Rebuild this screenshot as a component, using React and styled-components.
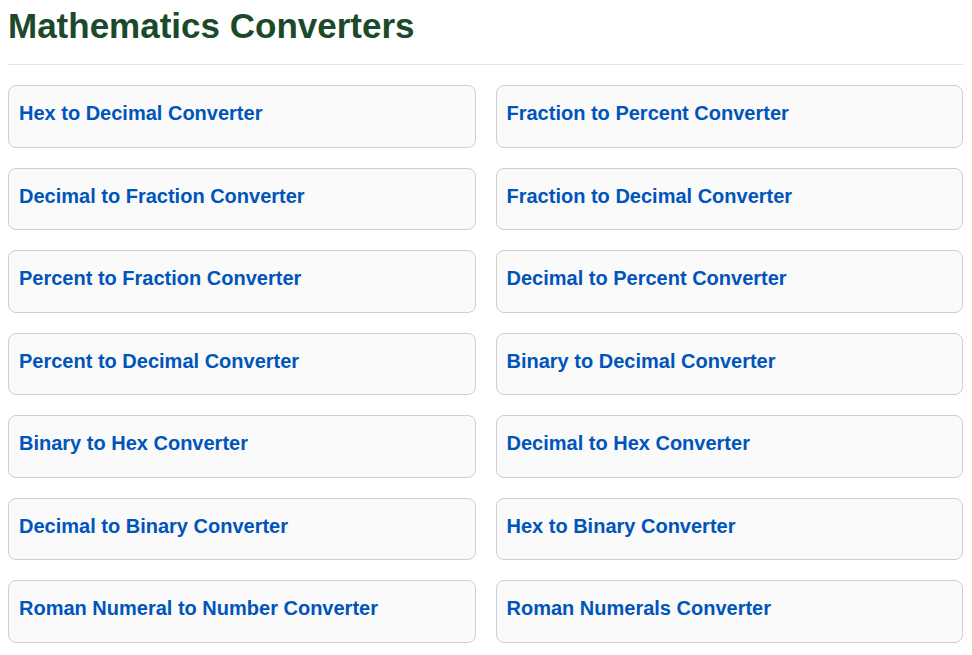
import React from 'react'
import styled, { createGlobalStyle } from 'styled-components'

const GlobalStyle = createGlobalStyle`
  body {
    margin: 8px;
    background: #fff;
    font-family: "Liberation Sans", Arial, sans-serif;
  }
`

const Page = styled.main`
  margin-right: 1px;
`

const Title = styled.h1`
  font-size: 35px;
  font-weight: bold;
  color: #1b4a2b;
  line-height: 36px;
  margin: 0;
`

const Rule = styled.hr`
  border: none;
  border-top: 1px solid #e3e3e3;
  margin: 20px 0;
`

const Grid = styled.div`
  display: grid;
  grid-template-columns: 1fr 1fr;
  gap: 20px;
`

const Card = styled.a`
  display: block;
  background: #fafafa;
  border: 1px solid #cfcfcf;
  border-radius: 8px;
  padding: 16px 10px 22px;
  font-size: 20px;
  line-height: 22.5px;
  font-weight: bold;
  color: #0055bb;
  text-decoration: none;
`

const converters = [
  'Hex to Decimal Converter',
  'Fraction to Percent Converter',
  'Decimal to Fraction Converter',
  'Fraction to Decimal Converter',
  'Percent to Fraction Converter',
  'Decimal to Percent Converter',
  'Percent to Decimal Converter',
  'Binary to Decimal Converter',
  'Binary to Hex Converter',
  'Decimal to Hex Converter',
  'Decimal to Binary Converter',
  'Hex to Binary Converter',
  'Roman Numeral to Number Converter',
  'Roman Numerals Converter',
]

const App = () => {
  return (
    <Page>
      <GlobalStyle />
      <Title>Mathematics Converters</Title>
      <Rule />
      <Grid>
        {converters.map((name) => (
          <Card key={name} href="#">{name}</Card>
        ))}
      </Grid>
    </Page>
  )
}

export default App
